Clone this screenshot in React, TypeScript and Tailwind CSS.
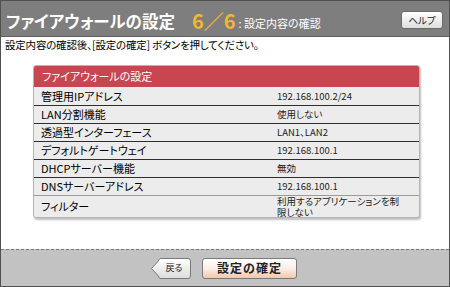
import React from 'react';

const rows: { label: string; value: React.ReactNode }[] = [
  { label: '管理用IPアドレス', value: '192.168.100.2/24' },
  { label: 'LAN分割機能', value: '使用しない' },
  { label: '透過型インターフェース', value: 'LAN1、LAN2' },
  { label: 'デフォルトゲートウェイ', value: '192.168.100.1' },
  { label: 'DHCPサーバー機能', value: '無効' },
  { label: 'DNSサーバーアドレス', value: '192.168.100.1' },
];

const BackButton: React.FC = () => (
  <button type="button" className="relative w-[40px] h-[21px] flex items-center justify-center pl-[6px]">
    <svg className="absolute inset-0" width="40" height="21" viewBox="0 0 40 21">
      <defs>
        <linearGradient id="bk" x1="0" y1="0" x2="0" y2="1">
          <stop offset="0" stopColor="#ffffff" />
          <stop offset="1" stopColor="#dcdcdc" />
        </linearGradient>
      </defs>
      <path d="M9 0.5 H37 Q39.5 0.5 39.5 3 V18 Q39.5 20.5 37 20.5 H9 L6.5 17 L0.5 10.5 L6.5 4 Z" fill="url(#bk)" stroke="#7a7a7a" />
    </svg>
    <span className="relative text-[9px] text-[#222]">戻る</span>
  </button>
);

const App: React.FC = () => {
  return (
    <div className="w-[450px] h-[287px] border border-[#505050] bg-white flex flex-col font-['Noto_Sans_CJK_JP',sans-serif] [font-feature-settings:'palt'] overflow-hidden">
      {/* Header */}
      <div className="h-[36px] shrink-0 bg-[#7e7e7e] border-b border-[#606060] flex items-center pl-[5px] pr-[6px]">
        <span className="text-white font-bold text-[16.5px] tracking-[0px] pt-[6px]">ファイアウォールの設定</span>
        <span className="ml-[17px] text-[#f3b62e] font-bold text-[20px] leading-none pt-[5px]">6／6</span>
        <span className="ml-[3px] text-white text-[11px] pt-[9px]">: 設定内容の確認</span>
        <button type="button" className="ml-auto mt-[3px] w-[42px] h-[18px] rounded-[3px] border border-[#6a6a6a] bg-gradient-to-b from-white to-[#dedede] text-[9.5px] text-[#222] flex items-center justify-center">
          ヘルプ
        </button>
      </div>

      {/* Body */}
      <div className="flex-1 flex flex-col">
        <p className="h-[14px] leading-[14px] text-[10.5px] text-black pl-[4px] mt-[1px] tracking-[-0.2px]">
          設定内容の確認後、[設定の確定] ボタンを押してください。
        </p>

        <div className="ml-[32px] mt-[13px] w-[387px] rounded-[3px] border border-[#b5b5b5] bg-[#ececec] shadow-[1px_2px_2px_rgba(0,0,0,0.25)] overflow-hidden">
          <div className="h-[21px] bg-[#c8464f] text-white text-[11px] pl-[8px] flex items-center">
            ファイアウォールの設定
          </div>
          {rows.map((r, i) => (
            <div
              key={r.label}
              className={`h-[18px] flex items-center ${i > 0 ? 'border-t border-[#2e2e2e]' : ''}`}
            >
              <span className="w-[243px] pl-[7px] text-[11px] text-black">{r.label}</span>
              <span className="text-[9.5px] text-[#222]">{r.value}</span>
            </div>
          ))}
          <div className="h-[22px] flex items-center border-t border-[#9a9a9a]">
            <span className="w-[243px] pl-[7px] text-[11px] text-black">フィルター</span>
            <span className="flex flex-col text-[9.5px] leading-[10.5px] text-[#222] whitespace-nowrap">
              <span>利用するアプリケーションを制</span>
              <span>限しない</span>
            </span>
          </div>
        </div>
      </div>

      {/* Footer */}
      <div className="h-[37px] shrink-0 bg-[#c2c2c2] border-t border-dashed border-[#7a7a7a] flex items-center justify-center gap-[11px] pr-[2px]">
        <BackButton />
        <button
          type="button"
          className="w-[95px] h-[21px] rounded-[3px] border border-[#7a7a7a] bg-gradient-to-b from-white via-[#fbeee6] to-[#f2c7ad] text-[12px] font-bold text-[#222] tracking-[1px] flex items-center justify-center"
        >
          設定の確定
        </button>
      </div>
    </div>
  );
};

export default App;
